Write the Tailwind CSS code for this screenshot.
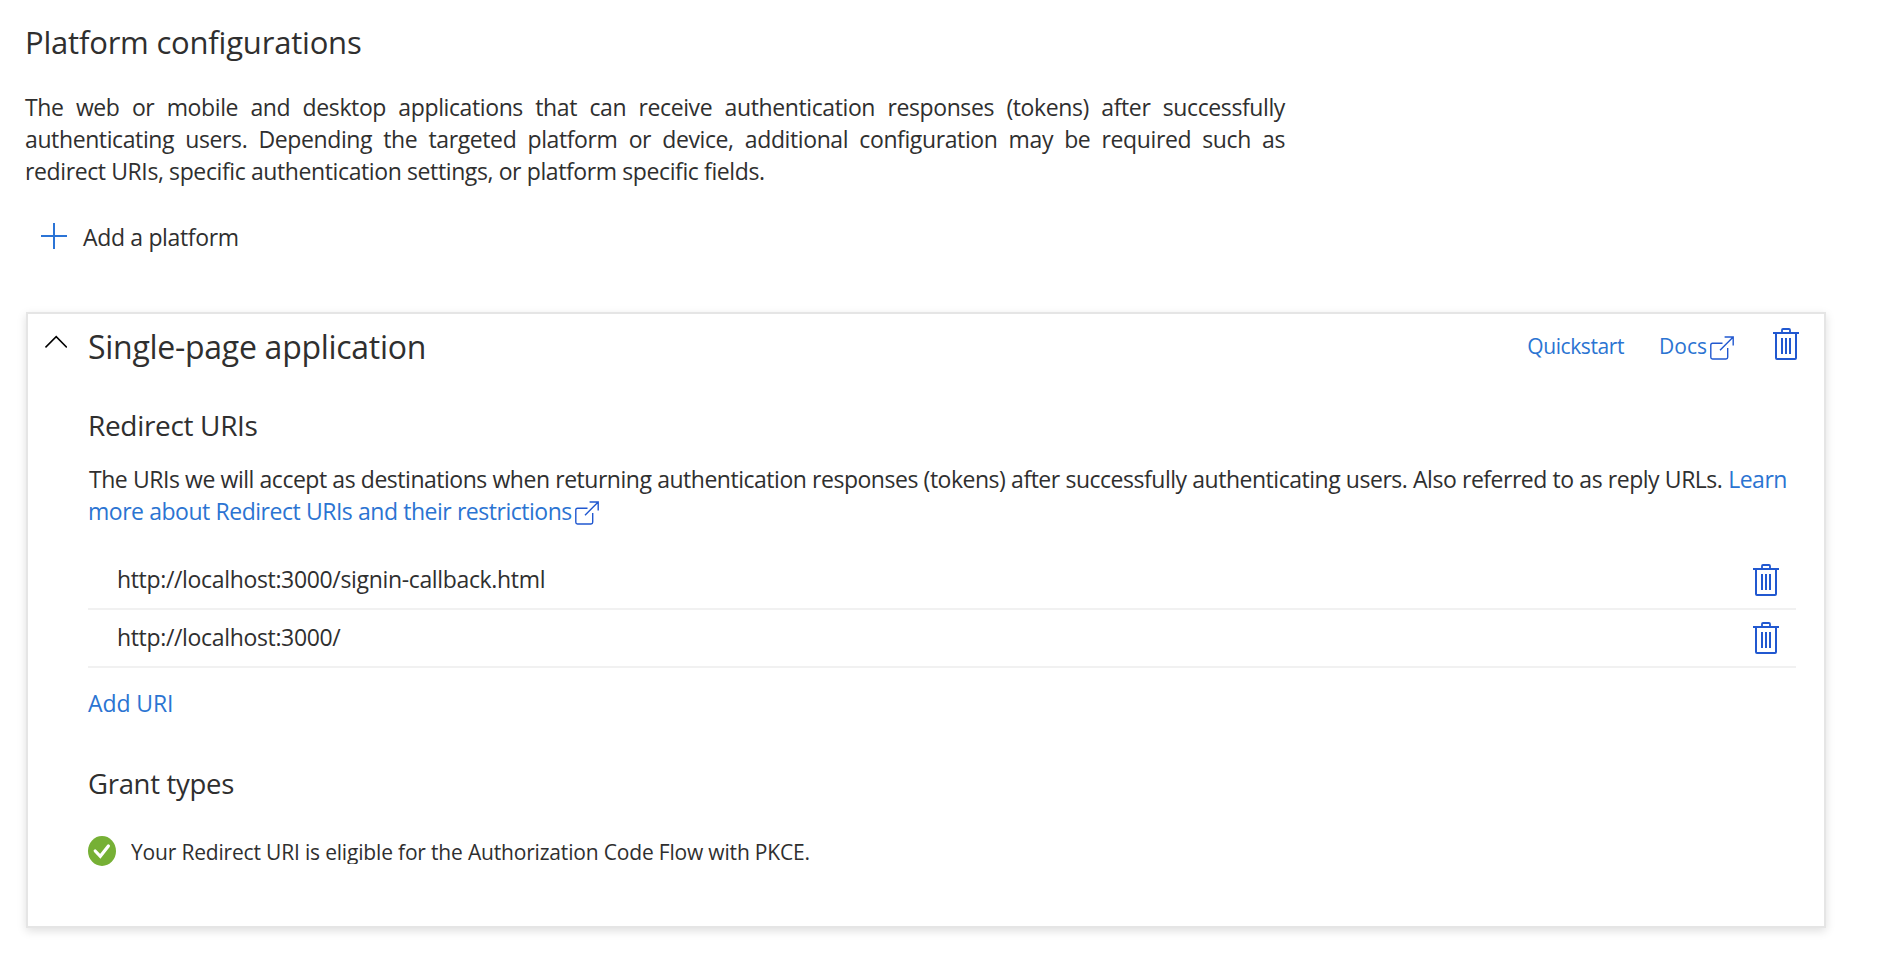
<!DOCTYPE html>
<html lang="en">
<head>
<meta charset="utf-8">
<title>Platform configurations</title>
<script src="https://cdn.jsdelivr.net/npm/@tailwindcss/browser@4"></script>
</head>
<body class="min-h-screen bg-white font-['Open_Sans',sans-serif] text-[#2f2f2f]">
<svg class="hidden">
  <symbol id="trash" viewBox="0 0 26 32">
    <g fill="none" stroke="currentColor" stroke-width="2">
      <path d="M9 5V2Q9 1 10 1H16Q17 1 17 2V5" stroke-width="1.8"/>
      <path d="M0 5H26M9 10V26M13 10V26M17 10V26"/>
      <path d="M3 5V30Q3 31 4 31H22Q23 31 23 30V5"/>
    </g>
  </symbol>
  <symbol id="external" viewBox="0 0 24 24">
    <path d="M12.5 7.2H2.5Q.8 7.2 .8 8.9V21.3Q.8 23 2.5 23H16Q17.7 23 17.7 21.3V12M10 14.2L23.2 1M14.6 1H23.2V9.4" fill="none" stroke="currentColor" stroke-width="1.4"/>
  </symbol>
</svg>
<main class="min-h-screen pt-[22px] pl-[26px]">
  <h1 class="-ml-px text-[31px] leading-10 tracking-[-0.2px]">Platform configurations</h1>
  <p class="mt-[29px] -ml-px w-[1260px] text-[23px] leading-8 tracking-[-0.39px] text-justify">The web or mobile and desktop applications that can receive authentication responses (tokens) after successfully authenticating users. Depending the targeted platform or device, additional configuration may be required such as redirect URIs, specific authentication settings, or platform specific fields.</p>
  <button class="mt-[35px] flex items-center gap-4 pl-[15px] text-[23px] leading-8 tracking-[-0.34px]">
    <svg class="w-[26px] h-[26px] -mt-1 text-[#2b74d6]" viewBox="0 0 26 26"><path d="M0 13H26M13 0V26" stroke="currentColor" stroke-width="2"/></svg>
    <span class="-mt-px">Add a platform</span>
  </button>

  <section class="mt-[59px] w-[1800px] h-[616px] border-2 border-[#e5e5e5] pt-3 pl-[60px] pr-7 shadow-[0_3px_9px_rgba(0,0,0,0.13)]">
    <header class="flex h-10 items-start -ml-[43px] -mr-[3px]">
      <svg class="mt-2 mr-[21px] w-[22px] h-[14px] text-black" viewBox="0 0 22 14"><path d="M.5 13.4L11.2 2.6L21.8 13.4" fill="none" stroke="currentColor" stroke-width="1.5"/></svg>
      <h2 class="mt-px text-[32px] leading-10 tracking-[-0.28px]">Single-page application</h2>
      <div class="ml-auto flex items-start text-[21px] leading-7 text-[#2b74d2]">
        <a class="mt-1.5 tracking-[-0.4px]">Quickstart</a>
        <a class="mt-1.5 ml-[35px]">Docs</a>
        <svg class="ml-[3px] mt-2.5 size-6 text-[#2158d0]"><use href="#external"/></svg>
        <svg class="ml-[39px] mt-0.5 w-[26px] h-8 text-[#2158d0]"><use href="#trash"/></svg>
      </div>
    </header>

    <h3 class="mt-[41px] text-[28px] leading-9 tracking-[-0.33px]">Redirect URIs</h3>
    <p class="mt-5 text-[23px] leading-8 tracking-[-0.48px] [word-spacing:0.2px] whitespace-nowrap"><span class="ml-px">The URIs we will accept as destinations when returning authentication responses (tokens) after successfully authenticating users. Also referred to as reply URLs.</span> <a class="text-[#2b74d2]">Learn</a><br><a class="text-[#2b74d2]">more about Redirect URIs and their restrictions<svg class="-mt-0.5 ml-[3px] inline-block size-6 text-[#2158d0]"><use href="#external"/></svg></a></p>

    <ul class="mt-[25px] text-[23px] leading-8 tracking-[-0.34px]">
      <li class="flex h-[58px] items-start justify-between border-b-2 border-[#f1f1f1] pl-[29px] pr-[17px]">
        <span class="mt-[11px]">http://localhost:3000/signin-callback.html</span>
        <svg class="mt-3 w-[26px] h-8 text-[#2158d0]"><use href="#trash"/></svg>
      </li>
      <li class="flex h-[58px] items-start justify-between border-b-2 border-[#f1f1f1] pl-[29px] pr-[17px]">
        <span class="mt-[11px]">http://localhost:3000/</span>
        <svg class="mt-3 w-[26px] h-8 text-[#2158d0]"><use href="#trash"/></svg>
      </li>
    </ul>
    <a class="mt-[19px] block text-[23px] leading-8 tracking-[-0.1px] text-[#2b74d2]">Add URI</a>

    <h3 class="mt-[47px] text-[27.5px] leading-9 tracking-[-0.3px]">Grant types</h3>
    <div class="mt-[34px] flex h-[30px] items-start gap-[15px]">
      <svg class="w-7 h-[30px]" viewBox="0 0 28 30"><ellipse cx="14" cy="15" rx="14" ry="15" fill="#76b035"/><path d="M7.2 15L12.3 20.3L20.4 10" fill="none" stroke="#fff" stroke-width="3.2" stroke-linecap="round"/></svg>
      <p class="mt-0.5 h-[26px] overflow-hidden text-[21px] leading-7 tracking-[-0.18px]">Your Redirect URI is eligible for the Authorization Code Flow with PKCE.</p>
    </div>
  </section>
</main>
</body>
</html>
